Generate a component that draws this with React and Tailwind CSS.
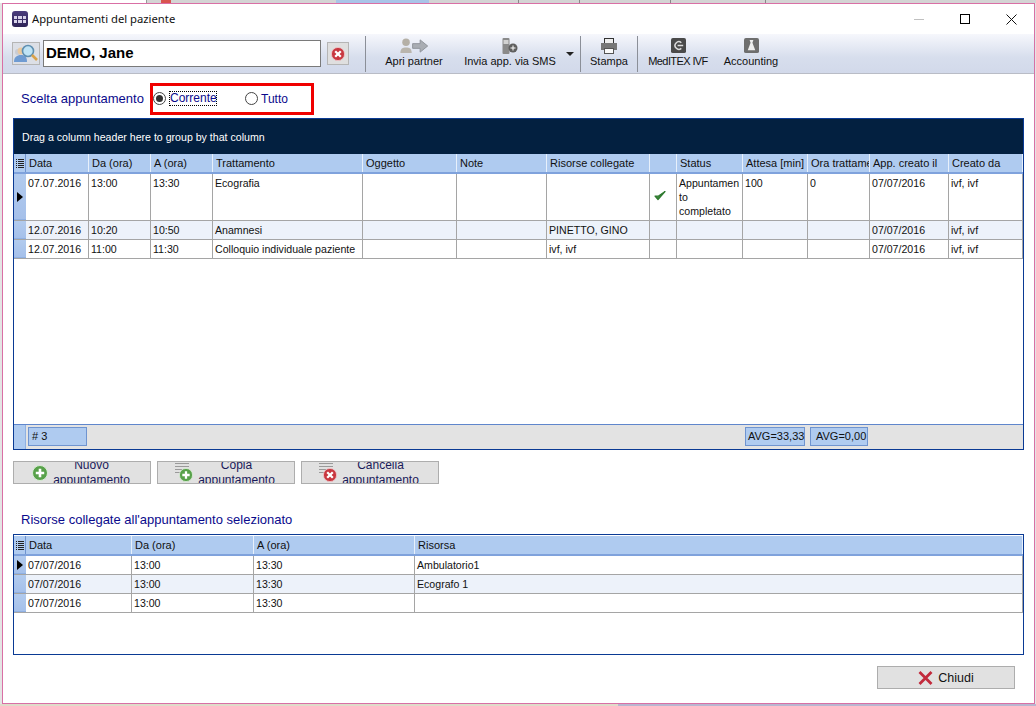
const font = { fontFamily: '"Liberation Sans", Arial, sans-serif' };

const cols1 = [63, 62, 62, 150, 94, 90, 103, 27, 66, 65, 62, 79, 74];
const head1 = ["Data", "Da (ora)", "A (ora)", "Trattamento", "Oggetto", "Note", "Risorse collegate", "", "Status", "Attesa [min]", "Ora trattamento", "App. creato il", "Creato da"];
const rows1 = [
  { h: 47, cells: ["07.07.2016", "13:00", "13:30", "Ecografia", "", "", "", "check", "Appuntamento completato", "100", "0", "07/07/2016", "ivf, ivf"] },
  { h: 19, alt: true, cells: ["12.07.2016", "10:20", "10:50", "Anamnesi", "", "", "PINETTO, GINO", "", "", "", "", "07/07/2016", "ivf, ivf"] },
  { h: 19, cells: ["12.07.2016", "11:00", "11:30", "Colloquio individuale paziente", "", "", "ivf, ivf", "", "", "", "", "07/07/2016", "ivf, ivf"] },
];

const cols2 = [106, 122, 161, 608];
const head2 = ["Data", "Da (ora)", "A (ora)", "Risorsa"];
const rows2 = [
  { h: 19, cells: ["07/07/2016", "13:00", "13:30", "Ambulatorio1"] },
  { h: 19, alt: true, cells: ["07/07/2016", "13:00", "13:30", "Ecografo 1"] },
  { h: 19, cells: ["07/07/2016", "13:00", "13:30", ""] },
];

function ColumnChooser() {
  return (
    <div className="w-[12px] shrink-0 flex items-center justify-center border-r border-[#6f94d0]">
      <svg width="8" height="9" viewBox="0 0 8 9">
        <path d="M0 0.5h1M0 2.5h1M0 4.5h1M0 6.5h1M0 8.5h1M2 0.5h6M2 2.5h6M2 4.5h6M2 6.5h6M2 8.5h6" stroke="#222" />
      </svg>
    </div>
  );
}

function Indicator({ active }) {
  return (
    <div className="w-[12px] shrink-0 flex items-center justify-center bg-gradient-to-b from-[#b2cbee] to-[#a5c0ea] border-b border-[#8fb0e2]">
      {active && <div className="border-y-[5px] border-l-[6px] border-y-transparent border-l-black" />}
    </div>
  );
}

function HeaderRow({ cols, labels }) {
  return (
    <div className="flex h-[20px] shrink-0 bg-[#afcbf0] border-b-2 border-[#7fa2dc]">
      <ColumnChooser />
      {labels.map((label, i) => (
        <div
          key={i}
          style={{ width: cols[i] }}
          className="shrink-0 border-r border-white/70 pl-[3px] leading-[18px] whitespace-nowrap overflow-hidden text-[#111]"
        >
          {label}
        </div>
      ))}
    </div>
  );
}

function CheckMark() {
  return (
    <div className="flex h-full items-center pl-[2px] pb-[5px]">
      <svg width="12" height="11" viewBox="0 0 12 11">
        <path d="M1 6l3 3.5L11 1.5 4.2 6.2z" fill="#3f8a3a" stroke="#2f7a30" strokeWidth="1.2" strokeLinejoin="round" />
      </svg>
    </div>
  );
}

function DataRow({ cols, row, active }) {
  return (
    <div style={{ height: row.h }} className={`flex shrink-0 border-b border-[#a5a5a5] ${row.alt ? "bg-[#edf2fa]" : "bg-white"}`}>
      <Indicator active={active} />
      {row.cells.map((cell, i) => (
        <div
          key={i}
          style={{ width: cols[i] }}
          className="shrink-0 border-r border-[#a5a5a5] pl-[2px] pt-[2px] text-[10.6px] leading-[14px] overflow-hidden text-[#111] [overflow-wrap:anywhere]"
        >
          {cell === "check" ? <CheckMark /> : cell}
        </div>
      ))}
    </div>
  );
}

function PlusBadge({ size = 16 }) {
  return (
    <svg width={size} height={size} viewBox="0 0 16 16">
      <circle cx="8" cy="8" r="7.5" fill="#58a14a" stroke="#d9ecd5" />
      <path d="M8 3.8v8.4M3.8 8h8.4" stroke="#fff" strokeWidth="2.6" />
    </svg>
  );
}

function CrossBadge({ size = 15 }) {
  return (
    <svg width={size} height={size} viewBox="0 0 16 16">
      <circle cx="8" cy="8" r="7.5" fill="#c8373f" stroke="#eec5c8" />
      <path d="M4.8 4.8l6.4 6.4M11.2 4.8l-6.4 6.4" stroke="#fff" strokeWidth="2.6" />
    </svg>
  );
}

function ListLines() {
  return (
    <div className="absolute left-0 top-0 flex flex-col gap-[2px]">
      <div className="w-[14px] h-[1px] bg-[#9a9a9a]" />
      <div className="w-[14px] h-[1px] bg-[#9a9a9a]" />
      <div className="w-[14px] h-[1px] bg-[#9a9a9a]" />
      <div className="w-[10px] h-[1px] bg-[#9a9a9a]" />
    </div>
  );
}

function ActionButton({ icon, top, bottom }) {
  return (
    <button className="w-[138px] h-[23px] bg-[#e1e1e1] border border-[#adadad] flex items-center justify-center gap-[3px] overflow-hidden">
      {icon}
      <span className="w-[82px] text-[12px] leading-[15px] text-center text-[#1a1a5a]">
        {top}
        <br />
        {bottom}
      </span>
    </button>
  );
}

function ToolButton({ icon, label, width, caret, labelClass = "" }) {
  return (
    <div style={{ width }} className={`relative flex flex-col items-center h-full pt-[3px] text-[#111] ${caret ? "pr-[22px]" : ""}`}>
      <div className="h-[17px] flex items-center">{icon}</div>
      <div className={`leading-[14px] whitespace-nowrap text-[11px] ${labelClass}`}>{label}</div>
      {caret && <div className="absolute right-[6px] top-[18px] border-x-[4px] border-t-[4px] border-x-transparent border-t-[#222]" />}
    </div>
  );
}

function Sep() {
  return <div className="w-[1px] h-[36px] bg-[#8b8f98] mt-[2px] shrink-0" />;
}

function Grid({ className, children }) {
  return <div className={`flex flex-col bg-white border border-[#0a3a94] overflow-hidden ${className}`}>{children}</div>;
}

// bits of the application behind the dialog
function TopStrip() {
  return (
    <div className="h-[3px] shrink-0 flex bg-[#d4d4d4]">
      <div className="w-[147px] bg-white border-r border-[#999]" />
      <div className="w-[14px]" />
      <div className="w-[10px] bg-[#d9534f]" />
      <div className="w-[165px]" />
      <div className="w-[93px] bg-[#a9c4e8]" />
      <div className="w-[90px] border-r border-[#888]" />
      <div className="w-[61px] border-r border-[#888]" />
      <div className="w-[91px] border-r border-[#888]" />
      <div className="w-[95px] border-r border-[#888]" />
    </div>
  );
}

function BottomStrip() {
  return (
    <div className="h-[2px] shrink-0 flex">
      <div className="w-[618px] bg-[#dfdbc9]" />
      <div className="flex-1 bg-[#b9b5d0]" />
    </div>
  );
}

export default function App() {
  return (
    <div style={font} className="w-[1036px] h-[706px] overflow-hidden flex flex-col bg-[#e4e4e4] text-[11px]">
      <TopStrip />
      <div className="flex-1 min-h-0 pl-[2px] pr-[1px]">
        <div className="h-full flex flex-col bg-white border border-[#d96fa5]">
          {/* title bar */}
          <div className="h-[30px] shrink-0 flex items-center pl-[9px]">
            <div className="w-[16px] h-[16px] rounded-[3px] bg-gradient-to-b from-[#4b3d7d] to-[#2f2457] grid grid-cols-3 gap-[1px] p-[2px] content-center">
              {[0, 1, 2, 3, 4, 5].map((n) => (
                <div key={n} className="h-[3px] bg-[#d9d4ea]" />
              ))}
            </div>
            <span className="ml-[4px] text-[11.25px] text-[#111]" style={{ fontFamily: '"Noto Sans", sans-serif' }}>
              Appuntamenti del paziente
            </span>
            <div className="ml-auto flex items-center">
              <div className="w-[46px] flex justify-center">
                <div className="w-[10px] h-[1px] bg-[#c0c0c0]" />
              </div>
              <div className="w-[46px] flex justify-center">
                <div className="w-[10px] h-[10px] border border-black" />
              </div>
              <div className="w-[46px] flex justify-center">
                <svg width="11" height="11" viewBox="0 0 11 11">
                  <path d="M0.5 0.5l10 10M10.5 0.5l-10 10" stroke="#111" />
                </svg>
              </div>
            </div>
          </div>

          {/* toolbar */}
          <div className="h-[40px] shrink-0 flex items-start bg-gradient-to-b from-[#f6f7fc] via-[#d7deed] via-60% to-[#d2d9ea] border-b border-[#b9bcc6] pl-[9px]">
            <div className="w-[28px] h-[23px] mt-[8px] bg-[#dcdfe6] border border-[#b5b5b5] flex items-center justify-center">
              <svg width="26" height="20" viewBox="0 0 26 20">
                <circle cx="5" cy="8" r="3" fill="#c9ccd4" />
                <circle cx="8" cy="7" r="3.4" fill="#e9c9a0" />
                <path d="M1 18c0-5 3-7 7-7s6 2 6 7z" fill="#6f9bd2" />
                <circle cx="15" cy="7" r="5.5" fill="#bfe3f5" stroke="#5f8fb0" strokeWidth="1.6" />
                <path d="M19 11l5 5" stroke="#d9a24a" strokeWidth="2.6" />
              </svg>
            </div>
            <div className="w-[278px] h-[27px] ml-[3px] mt-[6px] bg-white border border-[#7a7a7a] pl-[2px] text-[15px] leading-[24px] font-bold text-black">
              DEMO, Jane
            </div>
            <div className="w-[22px] h-[23px] ml-[6px] mt-[8px] bg-[#dfdfdf] border border-[#b5b5b5] flex items-center justify-center">
              <CrossBadge size={14} />
            </div>
            <div className="w-[1px] h-[36px] bg-[#8b8f98] ml-[16px] mt-[2px] shrink-0" />
            <ToolButton
              width={96}
              label="Apri partner"
              icon={
                <svg width="31" height="16" viewBox="0 0 32 17">
                  <circle cx="7" cy="4.5" r="4" fill="#b5b0a6" />
                  <path d="M1 16c0-5 2.5-6 6-6s6 1 6 6z" fill="#b9b5ac" />
                  <path d="M14 6h8V2l8 6.5-8 6.5v-4h-8z" fill="#a9adb3" stroke="#8d9197" />
                </svg>
              }
            />
            <ToolButton
              width={118}
              label="Invia app. via SMS"
              caret
              icon={
                <svg width="16" height="17" viewBox="0 0 16 17">
                  <rect x="0.5" y="1" width="7" height="16" rx="1" fill="#8a8a8a" />
                  <rect x="1.5" y="3" width="5" height="4" fill="#d2d2d2" />
                  <circle cx="11" cy="11" r="4.5" fill="#5f5f5f" />
                  <path d="M11 8.5v5M8.5 11h5" stroke="#fff" />
                </svg>
              }
            />
            <Sep />
            <ToolButton
              width={56}
              label="Stampa"
              icon={
                <svg width="16" height="16" viewBox="0 0 16 16">
                  <rect x="3.5" y="0.5" width="9" height="5" fill="#eee" stroke="#333" />
                  <rect x="0" y="5" width="16" height="7" fill="#777" />
                  <rect x="3.5" y="10.5" width="9" height="5" fill="#fafafa" stroke="#555" />
                </svg>
              }
            />
            <Sep />
            <ToolButton
              width={80}
              label="MedITEX IVF"
              labelClass="tracking-[-0.6px]"
              icon={
                <svg width="15" height="15" viewBox="0 0 16 16">
                  <rect width="16" height="16" rx="2" fill="#4a4a4a" />
                  <path d="M11 5a4 4 0 1 0 0 6" fill="none" stroke="#ddd" strokeWidth="1.6" />
                  <path d="M7 8h6" stroke="#ddd" strokeWidth="1.6" />
                </svg>
              }
            />
            <ToolButton
              width={66}
              label="Accounting"
              icon={
                <svg width="15" height="15" viewBox="0 0 16 16">
                  <rect width="16" height="16" rx="2" fill="#6e6e6e" />
                  <path d="M6 2h4l-1 3 3 8H4l3-8z" fill="#eee" />
                </svg>
              }
            />
          </div>

          {/* appointment choice */}
          <div className="h-[44px] shrink-0 flex items-center pl-[18px] pt-[5px] text-[12px] text-[#0a0a8c]">
            <span className="w-[129px] text-[13px]">Scelta appuntamento</span>
            <div className="w-[164px] h-[32px] border-[3px] border-[#f00000] flex items-center">
              <div className="w-[13px] h-[13px] rounded-full border border-[#444] flex items-center justify-center">
                <div className="w-[7px] h-[7px] rounded-full bg-[#333]" />
              </div>
              <span className="ml-[3px] w-[48px] h-[15px] leading-[13px] border border-dotted border-black whitespace-nowrap">Corrente</span>
              <div className="ml-[28px] w-[13px] h-[13px] rounded-full border border-[#444]" />
              <span className="ml-[3px]">Tutto</span>
            </div>
          </div>

          {/* appointments grid */}
          <div className="flex-1 flex flex-col px-[10px]">
            <Grid className="h-[332px] shrink-0">
              <div className="h-[35px] shrink-0 bg-[#032040] text-white text-[10.6px] pl-[8px] leading-[36px]">
                Drag a column header here to group by that column
              </div>
              <HeaderRow cols={cols1} labels={head1} />
              {rows1.map((row, i) => (
                <DataRow key={i} cols={cols1} row={row} active={i === 0} />
              ))}
              <div className="flex-1" />
              <div className="h-[25px] shrink-0 flex bg-[#e3e3e3] border-t border-[#5f86cc]">
                <div className="w-[12px] bg-[#afcbf0] border-r border-[#8fb0e2]" />
                <div className="w-[59px] h-[19px] ml-[2px] mt-[2px] bg-[#afcbf0] border border-[#6f94d0] pl-[3px] leading-[17px] text-[#111]">
                  # 3
                </div>
                <div className="w-[60px] h-[19px] ml-[658px] mt-[2px] bg-[#afcbf0] border border-[#6f94d0] pl-[2px] leading-[17px] whitespace-nowrap text-[#111]">
                  AVG=33,33
                </div>
                <div className="w-[58px] h-[19px] ml-[5px] mt-[2px] bg-[#afcbf0] border border-[#6f94d0] pl-[5px] leading-[17px] whitespace-nowrap text-[#111]">
                  AVG=0,00
                </div>
              </div>
            </Grid>

            {/* actions */}
            <div className="flex gap-[6px] mt-[11px]">
              <ActionButton icon={<PlusBadge />} top="Nuovo" bottom="appuntamento" />
              <ActionButton
                icon={
                  <div className="relative w-[18px] h-[19px]">
                    <ListLines />
                    <div className="absolute right-0 bottom-0">
                      <PlusBadge size={14} />
                    </div>
                  </div>
                }
                top="Copia"
                bottom="appuntamento"
              />
              <ActionButton
                icon={
                  <div className="relative w-[18px] h-[19px]">
                    <ListLines />
                    <div className="absolute right-0 bottom-0">
                      <CrossBadge size={14} />
                    </div>
                  </div>
                }
                top="Cancella"
                bottom="appuntamento"
              />
            </div>

            <div className="mt-[29px] ml-[8px] text-[13px] leading-[14px] text-[#0a0a8c]">
              Risorse collegate all'appuntamento selezionato
            </div>

            {/* resources grid */}
            <Grid className="h-[121px] shrink-0 mt-[7px]">
              <div className="h-[1px] shrink-0" />
              <HeaderRow cols={cols2} labels={head2} />
              {rows2.map((row, i) => (
                <DataRow key={i} cols={cols2} row={row} active={i === 0} />
              ))}
            </Grid>

            <div className="flex justify-end mt-[11px] pr-[9px]">
              <button className="w-[138px] h-[23px] bg-[#e1e1e1] border border-[#adadad] flex items-center justify-center gap-[5px] text-[12.5px] leading-[24px] text-[#111]">
                <svg width="15" height="14" viewBox="0 0 15 14">
                  <path d="M1.5 1l12 12M13.5 1l-12 12" stroke="#c22a3c" strokeWidth="2.8" />
                </svg>
                Chiudi
              </button>
            </div>
          </div>
        </div>
      </div>
      <BottomStrip />
    </div>
  );
}
